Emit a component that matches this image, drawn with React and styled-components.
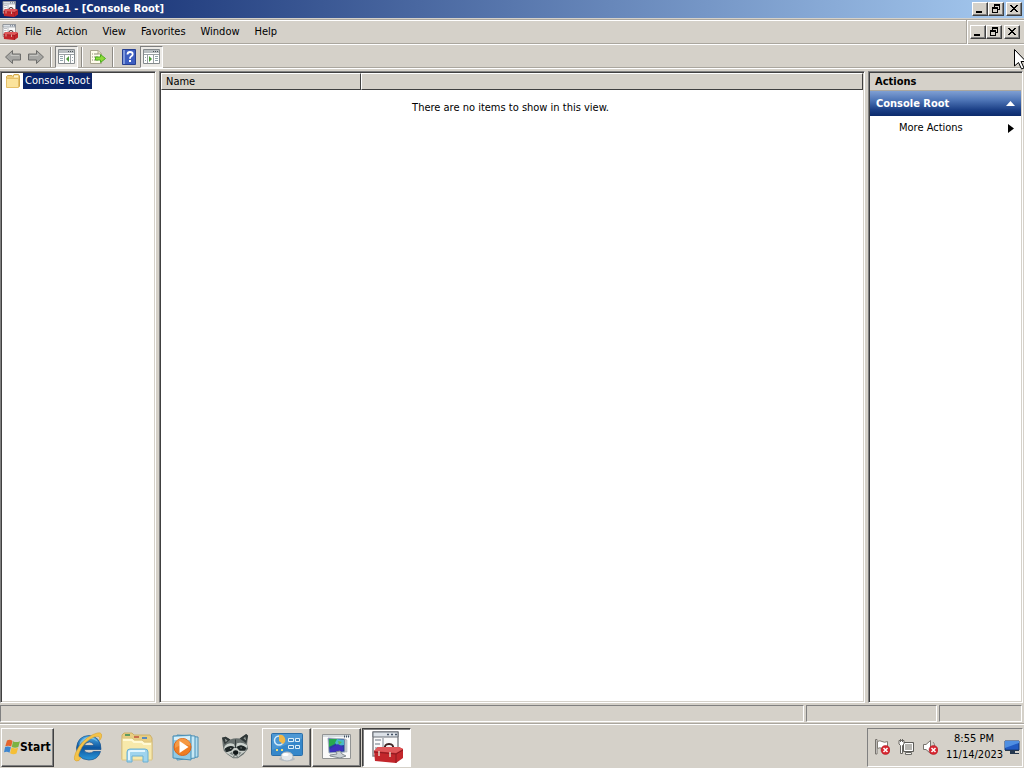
import React from "react";
import styled, { createGlobalStyle, css } from "styled-components";

const Global = createGlobalStyle`
  * { box-sizing: border-box; }
  html, body { margin: 0; height: 100%; }
  body {
    background: #d5d1c9;
    color: #000;
    font: 11px/14px "DejaVu Sans Condensed", "Noto Sans", sans-serif;
    cursor: default;
  }
  button { font: inherit; color: inherit; padding: 0; margin: 0; }
  svg { display: block; flex: none; }
`;

const Screen = styled.div`
  position: relative;
  display: flex;
  flex-direction: column;
  height: 100vh;
  overflow: hidden;
`;

const TitleBar = styled.header`
  display: flex;
  align-items: center;
  gap: 2px;
  height: 18px;
  padding: 0 2px;
  background: linear-gradient(90deg, #0a246a 0%, #a6caf0 100%);
  color: #fff;
`;

const Title = styled.h1`
  flex: 1;
  margin: 0;
  font-size: 11px;
  line-height: 18px;
  font-weight: bold;
`;

const raised = css`
  border: 1px solid;
  border-color: #fff #404040 #404040 #fff;
  box-shadow: inset -1px -1px 0 #808080;
`;

const sunken = css`
  border: 1px solid;
  border-color: #808080 #fff #fff #808080;
`;

const Controls = styled.div`
  display: flex;
  align-items: center;
`;

const ControlButton = styled.button`
  ${raised}
  width: 16px;
  height: 14px;
  margin-left: ${(p) => (p.$apart ? "2px" : "0")};
  background: #d5d1c9;
`;

const MenuBar = styled.nav`
  display: flex;
  align-items: center;
  height: 26px;
  margin-top: 1px;
  padding-left: 2px;
  border-top: 1px solid #aaa69e;
  border-bottom: 1px solid #fff;
  box-shadow: inset 0 1px 0 #fff, inset 0 -1px 0 #aaa69e;
`;

const MenuItems = styled.div`
  display: flex;
  flex: 1;
`;

const MenuItem = styled.button`
  padding: 2px 8px 2px 7px;
  border: 0;
  background: none;
`;

const ChildControls = styled(Controls)`
  height: 24px;
  padding: 0 4px 0 2px;
  border-left: 1px solid #fff;
  box-shadow: -1px 0 0 #aaa69e;
`;

const ToolBar = styled.div`
  display: flex;
  align-items: center;
  height: 24px;
  padding-left: 1px;
  border-bottom: 1px solid #fff;
  box-shadow: inset 0 -1px 0 #aaa69e;
`;

const ToolButton = styled.button`
  display: grid;
  place-items: center;
  width: 23px;
  height: 22px;
  border: 1px solid transparent;
  background: none;
  ${(p) =>
    p.$pressed &&
    css`
      ${sunken}
      background: #eceae6;
    `}
`;

const Separator = styled.div`
  width: 2px;
  height: 20px;
  margin: 0 3px;
  border-left: 1px solid #8d8a84;
  border-right: 1px solid #fff;
`;

const Panes = styled.main`
  display: grid;
  grid-template-columns: 156px 1fr 155px;
  gap: 3px;
  flex: 1;
  min-height: 0;
  padding: 2px 1px 1px 0;
`;

const Pane = styled.section`
  border: 1px solid;
  border-color: #808080 #fff #fff #808080;
  box-shadow: inset 1px 1px 0 #404040, inset -1px -1px 0 #d5d1c9;
  background: #fff;
  min-width: 0;
`;

const TreePane = styled(Pane)`
  padding: 1px 4px;
`;

const TreeItem = styled.button`
  display: flex;
  align-items: center;
  gap: 2px;
  border: 0;
  background: none;
`;

const TreeLabel = styled.span`
  padding: 1px 2px;
  background: #0a246a;
  color: #fff;
`;

const ListPane = styled(Pane)`
  padding: 1px;
`;

const List = styled.table`
  width: 100%;
  table-layout: fixed;
  border-collapse: separate;
  border-spacing: 0;
`;

const Column = styled.th`
  width: ${(p) => p.$width || "auto"};
  height: 17px;
  padding: 0 4px;
  border: 1px solid;
  border-color: #fff #404040 #404040 #fff;
  background: #d5d1c9;
  font-weight: normal;
  text-align: left;
`;

const Empty = styled.td`
  padding: 11px 3px 0 0;
  text-align: center;
`;

const ActionsPane = styled(Pane)`
  padding: 1px 1px 0;
`;

const PaneTitle = styled.h2`
  height: 18px;
  margin: 0;
  padding: 2px 5px;
  border-bottom: 1px solid #aaa69e;
  background: #d5d1c9;
  font-size: 11px;
  line-height: 14px;
`;

const GroupHeader = styled.button`
  display: flex;
  align-items: center;
  justify-content: space-between;
  width: 100%;
  height: 25px;
  padding: 0 6px;
  border: 0;
  background: linear-gradient(#7f9fd3 0%, #5077b8 35%, #1b3f86 75%, #0c2a6c 100%);
  && { color: #fff; font-weight: bold; }
`;

const ActionItem = styled.button`
  display: flex;
  align-items: center;
  justify-content: space-between;
  width: 100%;
  height: 24px;
  padding: 0 7px 0 29px;
  border: 0;
  background: none;
`;

const StatusBar = styled.footer`
  display: grid;
  grid-template-columns: 1fr 131px 83px;
  gap: 2px;
  height: 20px;
  padding: 1px 2px 1px 0;
  border-bottom: 1px solid #aaa69e;
`;

const StatusCell = styled.div`
  ${sunken}
`;

const TaskBar = styled.div`
  display: flex;
  align-items: center;
  height: 44px;
  padding: 1px 0 0 1px;
  border-top: 1px solid #fff;
`;

const StartButton = styled.button`
  ${raised}
  display: flex;
  align-items: center;
  width: 53px;
  height: 39px;
  padding-left: 2px;
  background: #d5d1c9;
  && { font-weight: bold; font-size: 12px; }
`;

const Pinned = styled.div`
  display: flex;
  margin: 0 3px 0 9px;
`;

const PinnedButton = styled.button`
  display: grid;
  place-items: center;
  width: 49px;
  height: 39px;
  border: 0;
  background: none;
`;

const Tasks = styled.div`
  display: flex;
  flex: 1;
  gap: 1px;
`;

const TaskButton = styled.button`
  ${raised}
  display: grid;
  place-items: center;
  width: 49px;
  height: 39px;
  background: #d5d1c9;
  ${(p) =>
    p.$active &&
    css`
      border-color: #404040 #fff #fff #404040;
      box-shadow: inset 1px 1px 0 #808080;
      background: #fff;
    `}
`;

const Tray = styled.div`
  ${sunken}
  display: flex;
  align-items: center;
  gap: 8px;
  height: 39px;
  margin-right: 1px;
  padding: 0 2px 0 6px;
`;

const TrayButton = styled.button`
  border: 0;
  background: none;
`;

const ClockArea = styled.div`
  display: flex;
  align-items: center;
  gap: 2px;
`;

const Clock = styled.time`
  width: 56px;
  line-height: 16px;
  text-align: center;
`;

const Pointer = styled.svg`
  position: absolute;
  top: 49px;
  right: -2px;
`;

function Toolbox({ size = 16 }) {
  return (
    <svg width={size} height={size} viewBox="0 0 32 32">
      <path d="M2 1H27V25H2Z" fill="#fafafa" stroke="#85878b" strokeWidth="1.5" />
      <path d="M2 1H27V6H2Z" fill="#dde2e8" stroke="#6b7079" />
      <path d="M16 3.5H18M20 3.5H22M24 3.5H26" stroke="#465366" strokeWidth="1.5" />
      <path d="M4 9H10M4 13H9M4 17H8M12 7V20" stroke="#9aa1aa" strokeWidth="1.3" />
      <path d="M14 18Q13 13 18 13Q23 13 22 18" fill="none" stroke="#3d2222" strokeWidth="2" />
      <path d="M3 20L7 16H28L32 18V27L25 32L4 30Z" fill="#c3262b" />
      <path d="M3 20L7 16H28L32 18L25 22Z" fill="#e0585a" />
      <path d="M3 21L25 23L32 19M25 23V32" fill="none" stroke="#8a1a20" />
      <path d="M8 20V25M19 21V26" stroke="#e9cfc2" strokeWidth="1.5" />
    </svg>
  );
}

function WindowGlyph({ kind }) {
  return (
    <svg width="14" height="12" viewBox="0 0 14 12" shapeRendering="crispEdges" aria-hidden="true">
      {kind === "min" && <path d="M3 8H9V10H3Z" />}
      {kind === "restore" && (
        <path d="M5 1H11V7H9V6H10V3H6V4H5ZM3 4H9V10H3ZM4 6V9H8V6Z" fillRule="evenodd" />
      )}
      {kind === "close" && (
        <path d="M3 2H5V3H6V4H8V3H9V2H11V3H10V4H9V5H8V6H9V7H10V8H11V9H9V8H8V7H6V8H5V9H3V8H4V7H5V6H6V5H5V4H4V3H3Z" />
      )}
    </svg>
  );
}

function WindowControls() {
  return (
    <>
      <ControlButton aria-label="Minimize"><WindowGlyph kind="min" /></ControlButton>
      <ControlButton aria-label="Restore"><WindowGlyph kind="restore" /></ControlButton>
      <ControlButton aria-label="Close" $apart><WindowGlyph kind="close" /></ControlButton>
    </>
  );
}

function Arrow({ forward }) {
  return (
    <svg width="18" height="16" viewBox="0 0 18 16">
      <path
        d={forward ? "M16.5 8L9.5 1.5V5H1.5V11H9.5V14.5Z" : "M1.5 8L8.5 1.5V5H16.5V11H8.5V14.5Z"}
        fill="#a6a6a3"
        stroke="#6e6e6c"
      />
      <path d={forward ? "M3 6.5H11V4.5" : "M7 4.5V6.5H15"} fill="none" stroke="#c6c6c2" />
    </svg>
  );
}

function PanelIcon({ right }) {
  return (
    <svg width="17" height="15" viewBox="0 0 17 15">
      <path d="M.5.5H16.5V14.5H.5Z" fill="#fff" stroke="#858a8d" />
      <path d="M1 1H16V4H1Z" fill="#b8bdc0" />
      <path d="M10 2.5H11M12 2.5H13M14 2.5H15" stroke="#4b5358" />
      <path d={right ? "M1 5.5H16M4.5 6V14M10.5 6V14" : "M1 5.5H16M6.5 6V14M12.5 6V14"} stroke="#9aa0a4" />
      <path d={right ? "M2 8.5H3M2 11.5H3M12 7.5H15M12 9.5H15M12 11.5H15" : "M2 7.5H5M2 9.5H5M2 11.5H5M14 8.5H15M14 11.5H15"} stroke="#91a4ab" />
      <path d={right ? "M6 7V13L9 10Z" : "M11 7V13L8 10Z"} fill="#4d9a3b" />
    </svg>
  );
}

function ExportIcon() {
  return (
    <svg width="17" height="16" viewBox="0 0 17 16">
      <path d="M1.5 1.5H9L12.5 4.5V14.5H1.5Z" fill="#fffceb" stroke="#aaa68f" />
      <path d="M9 1.5V5H12.5" fill="#e7dfbd" stroke="#aaa68f" />
      <path d="M3 5H4M5 5H9M3 8H4M5 8H9M3 11H4M5 11H9" stroke="#8c8c74" />
      <path d="M6.5 8H11.5V5.5L16.5 9.5L11.5 13.5V11H6.5Z" fill="#8fda38" stroke="#4cae20" />
    </svg>
  );
}

function HelpIcon() {
  return (
    <svg width="14" height="16" viewBox="0 0 14 16">
      <path d="M.5.5H13.5V15.5H.5Z" fill="#3d5ec0" stroke="#263f91" />
      <path d="M1 1H3V15H1Z" fill="#7d98dc" />
      <path d="M5.5 5.5Q5.5 3 8 3Q10.7 3 10.7 5.2Q10.7 6.7 9 7.5Q8 8.1 8 9.7" fill="none" stroke="#fff" strokeWidth="1.8" />
      <path d="M7 11H9V13H7Z" fill="#fff" />
    </svg>
  );
}

function FolderIcon() {
  return (
    <svg width="16" height="16" viewBox="0 0 16 16">
      <path d="M1.500 3.500L2.500 2.500H7L8 3.500L9 1.500H13.500L14.500 3V13.500H1.500Z" fill="#f0cd77" stroke="#d3a94c" />
      <path d="M9 2.500H13V4.500H9Z" fill="#fff5cf" />
      <path d="M1.500 5.500H13.500V14.500H1.500Z" fill="#fbe39c" stroke="#e6c069" />
    </svg>
  );
}

function WindowsFlag() {
  return (
    <svg width="16" height="16" viewBox="0 0 16 16">
      <path d="M3 1.500Q6 0 8.500 2L7.200 7.500Q4.500 6 1.300 7.300Z" fill="#e5642d" />
      <path d="M9 2.200Q12 4 16 2.200L14.300 8Q11 9.500 7.800 7.900Z" fill="#7cb342" />
      <path d="M1.100 8Q4 6.700 6.900 8.300L5.500 13.700Q3 12 0 13.300Z" fill="#3e86cf" />
      <path d="M7.500 8.600Q10.800 10.200 14.100 8.700L12.500 14.500Q9.300 16 6.100 14.200Z" fill="#f5bf36" />
    </svg>
  );
}

function ExplorerIcon() {
  return (
    <svg width="32" height="32" viewBox="0 0 32 32">
      <defs>
        <linearGradient id="ie" x1="0" y1="0" x2="0" y2="1">
          <stop offset="0" stopColor="#4fb0e8" />
          <stop offset=".5" stopColor="#0d559f" />
          <stop offset="1" stopColor="#2b98da" />
        </linearGradient>
      </defs>
      <path
        d="M29 18.500H12Q12.500 22 17 22Q20 22 21.500 20.500H28.500Q26 29 16.800 29Q4.500 28 4.500 17Q5.500 5 17 4.500Q29 5.500 29 18.500ZM12.300 14.500H22Q21 11 17.500 11Q13.500 11 12.300 14.500Z"
        fill="url(#ie)"
        stroke="#124f8d"
        strokeWidth=".7"
        fillRule="evenodd"
      />
      <path d="M8 11Q12 6 17 6Q23 6 26 11Q21 7 16 8Q11 9 7 15Z" fill="#a7dff7" opacity=".6" />
      <path d="M7 29.500Q0 32 3.500 22Q9 9 21 3.500Q31 -1 29.500 6Q29 8 27.500 9.500Q29 3.500 22 6Q12 10 7.500 21Q5 27 9 26.500Z" fill="#f3c34a" stroke="#d69b22" strokeWidth=".5" />
    </svg>
  );
}

function LibrariesIcon() {
  return (
    <svg width="34" height="32" viewBox="0 0 34 32">
      <path d="M2 4L4 2H12L14 4H30L32 7V28H2Z" fill="#e8ce82" stroke="#cdb068" />
      <path d="M5 4H10" stroke="#5d9c62" strokeWidth="2" />
      <path d="M14 6H19" stroke="#c9704f" strokeWidth="2" />
      <path d="M22 7H27" stroke="#5a8bbd" strokeWidth="2" />
      <path d="M2 7H12L14 9H22L24 11H32V29H2Z" fill="#f7e9ab" stroke="#dcc583" />
      <path d="M3 9H12L14 11H22L24 13H31" fill="none" stroke="#fff9d4" strokeWidth="2" />
      <path d="M7 31V21Q7 18 10 18H25Q28 18 28 21V31H23V25H12V31Z" fill="#9fd4ee" stroke="#6bb0d2" />
      <path d="M9 29V21Q9 20 11 20H25" fill="none" stroke="#e2f6ff" strokeWidth="2" />
    </svg>
  );
}

function MediaIcon() {
  return (
    <svg width="30" height="28" viewBox="0 0 30 28">
      <path d="M10 3L27 4V24L10 26Z" fill="#b5def0" stroke="#4b8fb5" />
      <path d="M6 2L24 3V25L6 27Z" fill="#c7e8f5" stroke="#4b8fb5" />
      <path d="M2 3L20 2V27L2 25Z" fill="#90c9e4" stroke="#4b8fb5" />
      <path d="M3 4L19 3V7H3Z" fill="#d7f0fa" />
      <circle cx="11.500" cy="14" r="8.500" fill="#ef7d22" stroke="#d9641a" />
      <path d="M4 11Q7 4 14 6Q20 8 19.500 13Q12 9 4 15Z" fill="#f9ac5a" opacity=".6" />
      <path d="M8.500 8L17.500 14L8.500 20Z" fill="#fff" />
    </svg>
  );
}

function RaccoonIcon() {
  return (
    <svg width="28" height="28" viewBox="0 0 30 28">
      <path d="M1 4L5 3L10 6Q15 4 20 5L27 0L29 2L28 11L29 16L24 22L18 26L13 26L7 22L3 18L2 13Z" fill="#69716f" />
      <path d="M1 4L5 3L10 6L4 11ZM27 0L29 2L27 10L20 5Z" fill="#303838" />
      <path d="M4 5L7 7L5 9ZM26 3L27 7L24 5Z" fill="#929995" />
      <path d="M4 13Q8 8 14 11L15 14Q8 12 3 17ZM28 12Q22 8 17 10L16 14Q22 11 28 15Z" fill="#cbd2cd" />
      <path d="M4 16Q9 11 14 14L12 18L6 20ZM17 14Q22 10 27 15L25 19L19 18Z" fill="#1d2525" />
      <path d="M15 6H16V15H15Z" fill="#303938" />
      <path d="M5 20L11 18L14 15H17L20 18L27 18L23 21L18 25L13 25Z" fill="#c9cec9" />
      <path d="M9 21L12 19L13 23ZM22 20L19 19L19 23Z" fill="#7b8381" />
      <ellipse cx="15.700" cy="20" rx="2.800" ry="2.500" fill="#111718" />
      <path d="M13 24Q16 22 18 24" stroke="#454e4d" fill="none" />
      <path d="M10 15.500H11M21 15H22" stroke="#d8dcd7" />
    </svg>
  );
}

function ControlPanelIcon() {
  return (
    <svg width="34" height="30" viewBox="0 0 34 30">
      <rect x="1.500" y="1.500" width="31" height="22" rx="1" fill="#3587ca" stroke="#2a6ea9" />
      <path d="M2 2H32V7L2 18Z" fill="#65aade" opacity=".5" />
      <circle cx="9" cy="8.500" r="4.500" fill="none" stroke="#d5ecfa" strokeWidth="1.500" />
      <path d="M9 9V3A5 5 0 0 1 13 12Z" fill="#f1b747" />
      <path d="M18.500 6.500H23.500V9.500H18.500ZM25.500 6.500H29.500V9.500H25.500ZM18.500 13.500H23.500V16.500H18.500ZM25.500 13.500H29.500V16.500H25.500Z" fill="#3b83be" stroke="#dceef8" />
      <path d="M6 18H8M11 18H13" stroke="#f4df75" strokeWidth="2" />
      <ellipse cx="17" cy="27" rx="8" ry="2" fill="#b4bac0" />
      <ellipse cx="17" cy="24.500" rx="6" ry="4.500" fill="#e3e7ea" stroke="#b0b8be" />
      <ellipse cx="15.500" cy="22.500" rx="3" ry="1.500" fill="#fff" />
    </svg>
  );
}

function RemoteIcon() {
  return (
    <svg width="32" height="28" viewBox="0 0 32 28">
      <path d="M1.500 1.500H29.500V25.500H1.500Z" fill="#fafafa" stroke="#929494" />
      <path d="M2 2H29V4H2Z" fill="#d6dbdf" />
      <path d="M23 3.500H24M25 3.500H26M27 3.500H28" stroke="#3f4f60" strokeWidth="2" />
      <path d="M7 5L24 6V19L8 20Z" fill="#263f9e" stroke="#a8b6bf" />
      <path d="M8 6L17 6L14 11L8 14Z" fill="#28a84f" />
      <path d="M16 6L23 7V12L17 13L14 10Z" fill="#48b7c9" />
      <path d="M9 16L17 11L22 14V18L9 19Z" fill="#3f31bd" />
      <path d="M17 8L21 9L18 12Z" fill="#56bb55" />
      <path d="M15 19L19 18L21 21L25 23L19 25L9 23V22L16 21Z" fill="#cbd1d5" stroke="#858d93" />
      <path d="M24 6L26 7V19L24 19Z" fill="#cad0d4" stroke="#9aa4ab" strokeWidth=".5" />
    </svg>
  );
}

function ErrorBadge() {
  return (
    <>
      <circle cx="11.500" cy="11" r="4.500" fill="#d92630" stroke="#a4141c" strokeWidth=".5" />
      <path d="M9.500 9L13.500 13M13.500 9L9.500 13" stroke="#fff" strokeWidth="1.500" />
    </>
  );
}

function TrayIcon({ kind }) {
  return (
    <svg width="16" height="16" viewBox="0 0 16 16" aria-hidden="true">
      {kind === "flag" && (
        <>
          <path d="M1.500.5H3V15H1.500Z" fill="#fff" stroke="#77736d" />
          <path d="M3.500 2.500Q6 1 8 2.500Q10.500 4 13.500 2.500V9.500Q10.500 11 8 9.500Q6 8 3.500 9.500Z" fill="#fff" stroke="#817c74" />
        </>
      )}
      {kind === "network" && (
        <>
          <path d="M5.500 3.500H15.500V12.500H5.500Z" fill="#b6b5b0" stroke="#5d5c58" />
          <path d="M6.500 4.500H14.500V11.500H6.500Z" fill="#b6b5b0" stroke="#fff" />
          <path d="M7.500 13.500H13.500V15.500H7.500Z" fill="#f5f4f0" stroke="#6d6c68" />
          <path d="M1 1.500H6V5L4.500 6.500V14.500H2.500V6.500L1 5Z" fill="#fff" stroke="#696762" />
          <path d="M2.500 0V3M4.500 0V3" stroke="#696762" />
        </>
      )}
      {kind === "sound" && (
        <>
          <path d="M1.500 5.500H4L8.500 1.500V14.500L4 10.500H1.500Z" fill="#fff" stroke="#77736d" />
          <path d="M11 3Q13 5 12.500 7" fill="none" stroke="#8d8983" />
        </>
      )}
      {kind !== "network" && <ErrorBadge />}
    </svg>
  );
}

function MonitorIcon() {
  return (
    <svg width="16" height="16" viewBox="0 0 16 16">
      <path d="M1 2H15V11H1Z" fill="#225bc2" stroke="#153b78" />
      <path d="M1 2H15V4L1 9Z" fill="#4f8fe2" />
      <path d="M1 11H15V12H11V14H15V15H6V12H1Z" fill="#25384f" />
    </svg>
  );
}

const menus = ["File", "Action", "View", "Favorites", "Window", "Help"];

const pinned = [
  ["Internet Explorer", ExplorerIcon],
  ["Libraries", LibrariesIcon],
  ["Media Player", MediaIcon],
  ["Raccoon", RaccoonIcon],
];

export default function App() {
  return (
    <>
      <Global />
      <Screen>
        <TitleBar>
          <Toolbox />
          <Title>Console1 - [Console Root]</Title>
          <Controls><WindowControls /></Controls>
        </TitleBar>
        <MenuBar aria-label="Menu">
          <Toolbox />
          <MenuItems>
            {menus.map((m) => <MenuItem key={m}>{m}</MenuItem>)}
          </MenuItems>
          <ChildControls><WindowControls /></ChildControls>
        </MenuBar>
        <ToolBar role="toolbar">
          <ToolButton aria-label="Back"><Arrow /></ToolButton>
          <ToolButton aria-label="Forward"><Arrow forward /></ToolButton>
          <Separator />
          <ToolButton aria-label="Console tree" $pressed><PanelIcon /></ToolButton>
          <Separator />
          <ToolButton aria-label="Export list"><ExportIcon /></ToolButton>
          <Separator />
          <ToolButton aria-label="Help"><HelpIcon /></ToolButton>
          <ToolButton aria-label="Action pane" $pressed><PanelIcon right /></ToolButton>
        </ToolBar>
        <Panes>
          <TreePane>
            <TreeItem>
              <FolderIcon />
              <TreeLabel>Console Root</TreeLabel>
            </TreeItem>
          </TreePane>
          <ListPane>
            <List>
              <thead>
                <tr>
                  <Column $width="200px">Name</Column>
                  <Column aria-label="Spare column" />
                </tr>
              </thead>
              <tbody>
                <tr><Empty colSpan={2}>There are no items to show in this view.</Empty></tr>
              </tbody>
            </List>
          </ListPane>
          <ActionsPane>
            <PaneTitle>Actions</PaneTitle>
            <GroupHeader>
              Console Root
              <svg width="9" height="5" viewBox="0 0 9 5"><path d="M0 5L4.500 0L9 5Z" fill="#fff" /></svg>
            </GroupHeader>
            <ActionItem>
              More Actions
              <svg width="6" height="9" viewBox="0 0 6 9"><path d="M0 0L6 4.500L0 9Z" /></svg>
            </ActionItem>
          </ActionsPane>
        </Panes>
        <StatusBar>
          <StatusCell />
          <StatusCell />
          <StatusCell />
        </StatusBar>
        <TaskBar>
          <StartButton><WindowsFlag />Start</StartButton>
          <Pinned>
            {pinned.map(([name, Icon]) => (
              <PinnedButton key={name} aria-label={name}><Icon /></PinnedButton>
            ))}
          </Pinned>
          <Tasks>
            <TaskButton aria-label="Control Panel"><ControlPanelIcon /></TaskButton>
            <TaskButton aria-label="Remote session"><RemoteIcon /></TaskButton>
            <TaskButton aria-label="Console1" $active><Toolbox size={32} /></TaskButton>
          </Tasks>
          <Tray>
            <TrayButton aria-label="Action Center"><TrayIcon kind="flag" /></TrayButton>
            <TrayButton aria-label="Network"><TrayIcon kind="network" /></TrayButton>
            <TrayButton aria-label="Volume"><TrayIcon kind="sound" /></TrayButton>
            <ClockArea>
              <Clock>8:55 PM<br />11/14/2023</Clock>
              <MonitorIcon />
            </ClockArea>
          </Tray>
        </TaskBar>
        <Pointer width="12" height="21" viewBox="0 0 12 21" aria-hidden="true">
          <path d="M.5.5V17L4.500 13.500L7.500 20L10 19L7 12.500H12Z" fill="#fff" stroke="#000" />
        </Pointer>
      </Screen>
    </>
  );
}
